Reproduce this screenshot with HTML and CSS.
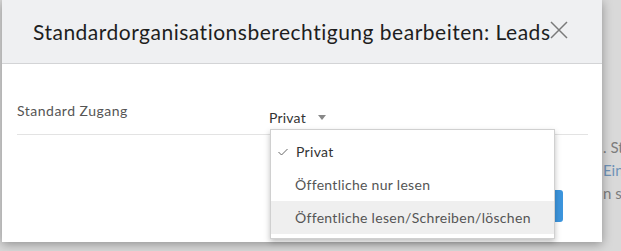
FILE: index.html
```html
<!DOCTYPE html>
<html lang="de">
<head>
    <meta charset="UTF-8">
    <meta name="viewport" content="width=device-width, initial-scale=1.0">
    <title>Standardorganisationsberechtigung bearbeiten</title>
    <link rel="stylesheet" href="styles.css">
</head>
<body>

    <div class="backdrop">
        <p class="bg-line">. St</p>
        <p class="bg-line bg-link">Eins</p>
        <p class="bg-line">n sc</p>
    </div>

    <div class="modal">
        <header class="modal-header">
            <h1>Standardorganisationsberechtigung bearbeiten: Leads</h1>
            <a href="#" class="close-button" aria-label="Schließen">
                <svg width="18" height="18" viewBox="0 0 18 18">
                    <path d="M1 1 L17 17 M17 1 L1 17" stroke="#7a7a7a" stroke-width="1.5" fill="none"/>
                </svg>
            </a>
        </header>

        <section class="modal-body">
            <div class="field-row">
                <label class="field-label">Standard Zugang</label>
                <div class="select">
                    <a href="#" class="select-value">Privat <span class="caret"></span></a>

                    <ul class="select-menu">
                        <li class="selected">
                            <svg class="check" width="10" height="8" viewBox="0 0 10 8">
                                <path d="M0.5 4 L3.5 7 L9.5 1" stroke="#666" stroke-width="1" fill="none"/>
                            </svg>Privat
                        </li>
                        <li>Öffentliche nur lesen</li>
                        <li class="hover">Öffentliche lesen/Schreiben/löschen</li>
                    </ul>
                </div>
            </div>
            <!-- Speichern-Button liegt unter dem geöffneten Menü -->
            <button class="save-button" aria-label="Speichern"></button>
        </section>
    </div>

</body>
</html>
```

FILE: styles.css
```css
body {
    font-family: Lato, "Open Sans", Arial, sans-serif;
    margin: 0;
    padding: 0;
    width: 621px;
    height: 251px;
    overflow: hidden;
    background: #d9d9d9;
    position: relative;
}

.backdrop {
    position: absolute;
    left: 603px;
    top: 139px;
    color: #7d7d7d;
    font-size: 15px;
    white-space: nowrap;
}

.bg-line {
    margin: 0 0 7px;
    line-height: 16px;
}

.bg-link {
    color: #6f93b8;
}

.modal {
    position: absolute;
    left: 2px;
    top: 0;
    width: 600px;
    height: 242px;
    background: #fff;
    box-shadow: 0 2px 10px rgba(0, 0, 0, 0.35);
}

.modal-header {
    height: 64px;
    background: #eff0f2;
    border-bottom: 1px solid #d3d4d6;
    position: relative;
    box-sizing: border-box;
}

.modal-header h1 {
    margin: 0;
    padding: 19px 0 0 31px;
    font-size: 21px;
    font-weight: normal;
    letter-spacing: 0.5px;
    color: #1e1e1e;
    line-height: 26px;
    white-space: nowrap;
}

.close-button {
    position: absolute;
    left: 548px;
    top: 21px;
}

.modal-body {
    padding: 0 14px 0 15px;
    position: relative;
    height: 178px;
}

.field-row {
    display: flex;
    padding-top: 37px;
    height: 33px;
    border-bottom: 1px solid #e3e3e3;
}

.field-label {
    width: 252px;
    font-size: 14px;
    letter-spacing: 0.5px;
    color: #555;
    line-height: 20px;
}

.select {
    position: relative;
    padding-top: 6px;
}

.select-value {
    color: #333;
    text-decoration: none;
    font-size: 14px;
    letter-spacing: 0.2px;
    line-height: 20px;
}

.caret {
    display: inline-block;
    margin-left: 8px;
    vertical-align: 3px;
    border-left: 4px solid transparent;
    border-right: 4px solid transparent;
    border-top: 5px solid #888;
}

.select-menu {
    position: absolute;
    left: 1px;
    top: 28px;
    width: 283px;
    margin: 0;
    padding: 5px 0 4px;
    list-style: none;
    background: #fff;
    border: 1px solid #d0d0d0;
    box-shadow: 0 3px 6px rgba(0, 0, 0, 0.25);
    z-index: 2;
}

.select-menu li {
    padding: 0 0 0 24px;
    height: 33px;
    line-height: 33px;
    font-size: 14px;
    letter-spacing: 0.3px;
    color: #555;
    white-space: nowrap;
}

.select-menu li.selected {
    color: #333;
    padding-left: 7px;
}

.check {
    margin-right: 8px;
    vertical-align: 1px;
}

.select-menu li.hover {
    background: #efefef;
}

.save-button {
    position: absolute;
    left: 481px;
    top: 126px;
    width: 80px;
    height: 32px;
    background-color: #3c95dd;
    border: none;
    border-radius: 3px;
}
```
